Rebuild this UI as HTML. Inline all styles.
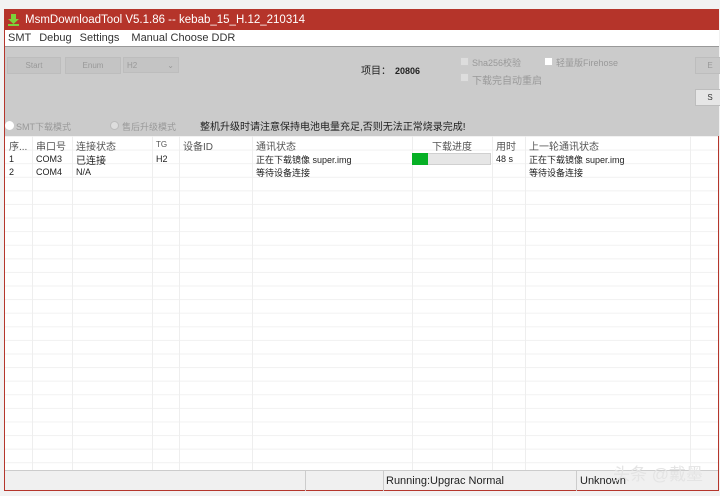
<!DOCTYPE html>
<html><head><meta charset="utf-8"><style>
*{margin:0;padding:0;box-sizing:border-box}
body{width:720px;height:496px;background:#f2f2f2;position:relative;overflow:hidden;font-family:"Liberation Sans","Noto Sans CJK SC",sans-serif;}
.a{position:absolute}
.win{left:4px;top:9px;width:715px;height:482px;border:1px solid #b5362c;background:#fff}
.title{left:5px;top:10px;width:714px;height:20px;background:#b5342a;color:#fff;font-size:11.5px;line-height:20px;padding-left:20px}
.menu{left:5px;top:30px;width:714px;height:16px;background:#fff;font-size:11px;line-height:16px;color:#333}
.gray{left:5px;top:46px;width:714px;height:90px;background:#cbcbcb;border-top:1px solid #999}
.btn{background:#c4c4c4;border:1px solid #bdbdbd;color:#999;font-size:8px;text-align:center;line-height:16px}
.t{font-size:10px;color:#222;white-space:nowrap}
.g{font-size:9px;color:#999;white-space:nowrap}
.tbl{left:5px;top:136px;width:713px;height:334px;background:#fff;
background-image:linear-gradient(#f1f1f1 1px,transparent 1px);background-size:100% 13.6px;background-position:0 0}
.vl{position:absolute;top:136px;height:334px;width:1px;background:#eeeeee}
.c{position:absolute;font-size:9px;color:#222;white-space:nowrap}
.h{position:absolute;font-size:10px;color:#555;white-space:nowrap}
.status{left:5px;top:470px;width:713px;height:20px;background:#f0f0f0;border-top:1px solid #ccc;font-size:11px;color:#222;line-height:20px}
</style></head><body>
<div class="a win"></div>
<div class="a title">MsmDownloadTool V5.1.86 -- kebab_15_H.12_210314</div>
<svg class="a" style="left:8px;top:13px" width="11" height="13"><path d="M3 1h5v5h3L5.5 11 0 6h3z" fill="#7dd33a"/><rect x="0" y="11" width="11" height="2" fill="#7dd33a"/></svg>
<div class="a menu"><span style="margin-left:3px">SMT</span><span style="margin-left:8px">Debug</span><span style="margin-left:8px">Settings</span><span style="margin-left:12px">Manual Choose DDR</span></div>
<div class="a gray"></div>
<div class="a btn" style="left:7px;top:57px;width:54px;height:17px">Start</div>
<div class="a btn" style="left:65px;top:57px;width:56px;height:17px">Enum</div>
<div class="a btn" style="left:123px;top:57px;width:56px;height:16px;text-align:left;padding-left:3px">H2<span style="float:right;margin-right:4px">⌄</span></div>
<div class="a t" style="left:361px;top:62px">项目：<span style="font-size:9px;margin-left:4px;font-weight:bold">20806</span></div>
<div class="a" style="left:460px;top:57px;width:9px;height:9px;background:#ddd;border:1px solid #ccc"></div>
<div class="a g" style="left:472px;top:56px">Sha256校验</div>
<div class="a" style="left:460px;top:73px;width:9px;height:9px;background:#ddd;border:1px solid #ccc"></div>
<div class="a g" style="left:472px;top:72px;font-size:10px">下载完自动重启</div>
<div class="a" style="left:544px;top:57px;width:9px;height:9px;background:#fff;border:1px solid #ccc"></div>
<div class="a g" style="left:556px;top:56px">轻量版Firehose</div>
<div class="a btn" style="left:695px;top:57px;width:30px;height:17px;background:#c8c8c8">E</div>
<div class="a btn" style="left:695px;top:89px;width:30px;height:17px;background:#e6e6e6;color:#333">S</div>
<div class="a" style="left:5px;top:121px;width:9px;height:9px;border-radius:50%;background:#fff"></div>
<div class="a g" style="left:16px;top:120px">SMT下载模式</div>
<div class="a" style="left:110px;top:121px;width:9px;height:9px;border-radius:50%;background:#ddd;border:1px solid #bbb"></div>
<div class="a g" style="left:122px;top:120px">售后升级模式</div>
<div class="a t" style="left:200px;top:118px">整机升级时请注意保持电池电量充足,否则无法正常烧录完成!</div>
<div class="a tbl"></div>
<div class="vl" style="left:32px"></div><div class="vl" style="left:72px"></div><div class="vl" style="left:152px"></div><div class="vl" style="left:179px"></div><div class="vl" style="left:252px"></div><div class="vl" style="left:412px"></div><div class="vl" style="left:492px"></div><div class="vl" style="left:525px"></div><div class="vl" style="left:690px"></div>
<div class="h" style="left:9px;top:138px">序...</div><div class="h" style="left:36px;top:138px">串口号</div><div class="h" style="left:76px;top:138px">连接状态</div><div class="h" style="left:156px;top:140px;font-size:8px">TG</div><div class="h" style="left:183px;top:138px">设备ID</div><div class="h" style="left:256px;top:138px">通讯状态</div><div class="h" style="left:432px;top:138px">下载进度</div><div class="h" style="left:496px;top:138px">用时</div><div class="h" style="left:529px;top:138px">上一轮通讯状态</div>
<div class="c" style="left:9px;top:154px">1</div><div class="c" style="left:36px;top:154px">COM3</div><div class="c" style="left:76px;top:152px;font-size:10px">已连接</div><div class="c" style="left:156px;top:154px">H2</div><div class="c" style="left:256px;top:153px">正在下载镜像 super.img</div>
<div class="a" style="left:412px;top:153px;width:79px;height:12px;background:#e6e6e6;border:1px solid #d0d0d0"></div><div class="a" style="left:412px;top:153px;width:16px;height:12px;background:#06b025"></div>
<div class="c" style="left:496px;top:154px">48 s</div><div class="c" style="left:529px;top:153px">正在下载镜像 super.img</div>
<div class="c" style="left:9px;top:167px">2</div><div class="c" style="left:36px;top:167px">COM4</div><div class="c" style="left:76px;top:167px">N/A</div><div class="c" style="left:256px;top:166px">等待设备连接</div><div class="c" style="left:529px;top:166px">等待设备连接</div>
<div class="a status"><div class="a" style="left:300px;top:0;width:1px;height:20px;background:#ccc"></div><div class="a" style="left:378px;top:0;width:1px;height:20px;background:#ccc"></div><span class="a" style="left:381px">Running:Upgrac Normal</span><div class="a" style="left:571px;top:0;width:1px;height:20px;background:#ccc"></div><span class="a" style="left:575px">Unknown</span><span class="a" style="left:608px;top:-6px;color:#e4e4e4;font-size:17px">头条 @戴墨</span></div>
</body></html>
